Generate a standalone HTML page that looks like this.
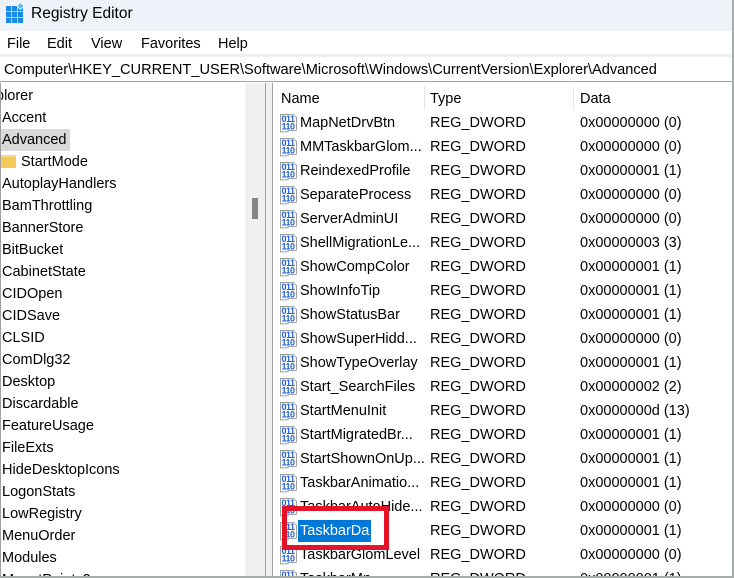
<!DOCTYPE html>
<html><head><meta charset="utf-8"><style>
*{margin:0;padding:0;box-sizing:border-box}
html,body{width:734px;height:578px;overflow:hidden}
body{background:#fff;font-family:"Liberation Sans",sans-serif;font-size:14.5px;color:#000}
#wrap{position:relative;width:734px;height:578px;overflow:hidden}
.abs{position:absolute;white-space:nowrap}
#title{left:0;top:0;width:734px;height:31px;background:#eef3f9}
#menu{left:0;top:31px;width:734px;height:23px;background:#fff}
#band{left:0;top:54px;width:734px;height:3px;background:#f0f0f0}
#addr{left:0;top:57px;width:734px;height:25px;background:#fff;border-bottom:1px solid #a0a0a0}
.l{position:absolute;left:2px;height:22px;line-height:22px}
.row{position:absolute;left:273px;height:24px;line-height:24px;width:459px}
.row .n{position:absolute;left:27px}
.row .t{position:absolute;left:157px}
.row .d{position:absolute;left:307px}
.row svg{position:absolute;left:6px;top:2px}
</style></head><body><div id="wrap">
<div class="abs" id="title"></div>
<svg class="abs" style="left:5px;top:3px" width="20" height="21" viewBox="0 0 20 21">
<rect x="1" y="3" width="17" height="17" fill="#1a8be0"/>
<g stroke="#9fd3f7" stroke-width="1"><line x1="6.5" y1="3" x2="6.5" y2="20"/><line x1="12.5" y1="3" x2="12.5" y2="20"/><line x1="1" y1="8.5" x2="18" y2="8.5"/><line x1="1" y1="14.5" x2="18" y2="14.5"/></g>
<rect x="13" y="0.5" width="5" height="5" transform="rotate(45 15.5 3)" fill="#5cb8f0" stroke="#fff" stroke-width="0.8"/>
</svg>
<div class="abs" style="left:31px;top:4px;font-size:15.5px;line-height:20px">Registry Editor</div>
<div class="abs" id="menu"></div>
<div class="abs" style="left:7px;top:35px;line-height:18px">File</div>
<div class="abs" style="left:47px;top:35px;line-height:18px">Edit</div>
<div class="abs" style="left:91px;top:35px;line-height:18px">View</div>
<div class="abs" style="left:141px;top:35px;line-height:18px">Favorites</div>
<div class="abs" style="left:218px;top:35px;line-height:18px">Help</div>
<div class="abs" id="band"></div>
<div class="abs" id="addr"></div>
<div class="abs" style="left:4px;top:60px;line-height:20px;font-size:14.6px">Computer\HKEY_CURRENT_USER\Software\Microsoft\Windows\CurrentVersion\Explorer\Advanced</div>
<div class="abs" style="left:245px;top:83px;width:20px;height:493px;background:#f0f0f0"></div>
<div class="abs" style="left:252px;top:198px;width:6px;height:21px;background:#858585"></div>
<div class="abs" style="left:265px;top:83px;width:1px;height:493px;background:#a0a0a0"></div>
<div class="abs" style="left:266px;top:83px;width:6px;height:493px;background:#f0f0f0"></div>
<div class="abs" style="left:272px;top:83px;width:1px;height:493px;background:#a0a0a0"></div>
<div class="abs" style="left:1px;top:129px;width:69px;height:22px;background:#d9d9d9"></div>
<div class="abs" style="left:1px;top:155px;width:15px;height:13px;background:#f4c95a;border-top:2px solid #f8da80"></div>
<div class="l" style="top:85px;left:-4px">plorer</div>
<div class="l" style="top:107px">Accent</div>
<div class="l" style="top:129px">Advanced</div>
<div class="l" style="top:151px;left:21px">StartMode</div>
<div class="l" style="top:173px">AutoplayHandlers</div>
<div class="l" style="top:195px">BamThrottling</div>
<div class="l" style="top:217px">BannerStore</div>
<div class="l" style="top:239px">BitBucket</div>
<div class="l" style="top:261px">CabinetState</div>
<div class="l" style="top:283px">CIDOpen</div>
<div class="l" style="top:305px">CIDSave</div>
<div class="l" style="top:327px">CLSID</div>
<div class="l" style="top:349px">ComDlg32</div>
<div class="l" style="top:371px">Desktop</div>
<div class="l" style="top:393px">Discardable</div>
<div class="l" style="top:415px">FeatureUsage</div>
<div class="l" style="top:437px">FileExts</div>
<div class="l" style="top:459px">HideDesktopIcons</div>
<div class="l" style="top:481px">LogonStats</div>
<div class="l" style="top:503px">LowRegistry</div>
<div class="l" style="top:525px">MenuOrder</div>
<div class="l" style="top:547px">Modules</div>
<div class="l" style="top:569px">MountPoints2</div>
<div class="abs" style="left:281px;top:89px;line-height:20px">Name</div>
<div class="abs" style="left:430px;top:89px;line-height:20px">Type</div>
<div class="abs" style="left:580px;top:89px;line-height:20px">Data</div>
<div class="abs" style="left:424px;top:86px;width:1px;height:24px;background:#e5e5e5"></div>
<div class="abs" style="left:573px;top:86px;width:1px;height:24px;background:#e5e5e5"></div>
<div id="rows"></div>
<script>
var r=[["MapNetDrvBtn","0x00000000 (0)"],["MMTaskbarGlom...","0x00000000 (0)"],["ReindexedProfile","0x00000001 (1)"],["SeparateProcess","0x00000000 (0)"],["ServerAdminUI","0x00000000 (0)"],["ShellMigrationLe...","0x00000003 (3)"],["ShowCompColor","0x00000001 (1)"],["ShowInfoTip","0x00000001 (1)"],["ShowStatusBar","0x00000001 (1)"],["ShowSuperHidd...","0x00000000 (0)"],["ShowTypeOverlay","0x00000001 (1)"],["Start_SearchFiles","0x00000002 (2)"],["StartMenuInit","0x0000000d (13)"],["StartMigratedBr...","0x00000001 (1)"],["StartShownOnUp...","0x00000001 (1)"],["TaskbarAnimatio...","0x00000001 (1)"],["TaskbarAutoHide...","0x00000000 (0)"],["TaskbarDa","0x00000001 (1)"],["TaskbarGlomLevel","0x00000000 (0)"],["TaskbarMn","0x00000001 (1)"]];
var ic='<svg width="19" height="20" viewBox="0 0 19 20"><path d="M1.5 1.5h13l3 3v12.5c-2 2-4 -1-8 1s-6 0-8 1z" fill="#fff" stroke="#a0a0a0"/><text x="9" y="9" font-size="9" font-weight="bold" fill="#1f5fd0" text-anchor="middle" font-family="Liberation Sans" letter-spacing="-0.5">011</text><text x="9" y="16.5" font-size="9" font-weight="bold" fill="#1f5fd0" text-anchor="middle" font-family="Liberation Sans" letter-spacing="-0.5">110</text></svg>';
var h='';
r.forEach(function(x,i){var sel=i==17;h+='<div class="row" style="top:'+(111+i*24)+'px">'+ic+'<span class="n"'+(sel?' style="background:#0078d7;color:#fff;left:25px;padding:0 2px;height:22px;line-height:22px;top:1px"':'')+'>'+x[0]+'</span><span class="t">REG_DWORD</span><span class="d">'+x[1]+'</span></div>';});
document.getElementById('rows').innerHTML=h;
</script>
<div class="abs" style="left:282px;top:506px;width:107px;height:44px;border:5px solid #e3132a"></div>
<div class="abs" style="left:0;top:83px;width:1px;height:495px;background:#a0a0a0"></div>
<div class="abs" style="left:732px;top:0;width:2px;height:578px;background:#a8acab"></div>
<div class="abs" style="left:0;top:576px;width:734px;height:2px;background:#a8acab"></div>
</div></body></html>
